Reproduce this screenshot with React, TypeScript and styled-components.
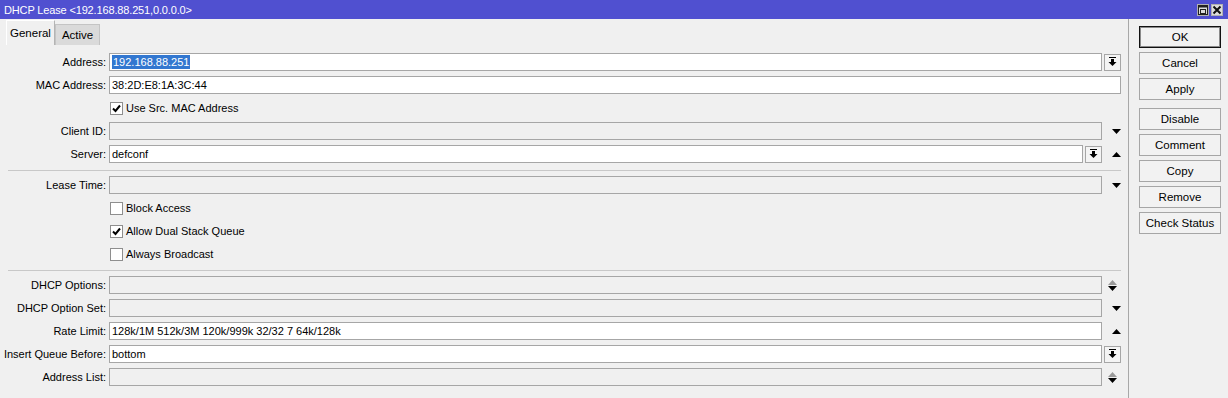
import styled, { createGlobalStyle } from "styled-components";

const GlobalStyle = createGlobalStyle`
  html, body {
    margin: 0;
    padding: 0;
    background: #f0f0f0;
  }
  body {
    font-family: "Liberation Sans", Arial, sans-serif;
    font-size: 11px;
    color: #000;
  }
`;

type Trail = "none" | "down" | "up" | "both" | "box";

type FieldRow = {
  label: string;
  value?: string;
  disabled?: boolean;
  selected?: boolean;
  trail: Trail;
  box?: boolean;
};

const top: FieldRow[] = [
  { label: "Address:", value: "192.168.88.251", selected: true, trail: "box" },
  { label: "MAC Address:", value: "38:2D:E8:1A:3C:44", trail: "none" },
];

const idRows: FieldRow[] = [
  { label: "Client ID:", disabled: true, trail: "down" },
  { label: "Server:", value: "defconf", trail: "up", box: true },
];

const bottom: FieldRow[] = [
  { label: "DHCP Options:", disabled: true, trail: "both" },
  { label: "DHCP Option Set:", disabled: true, trail: "down" },
  { label: "Rate Limit:", value: "128k/1M 512k/3M 120k/999k 32/32 7 64k/128k", trail: "up" },
  { label: "Insert Queue Before:", value: "bottom", trail: "box" },
  { label: "Address List:", disabled: true, trail: "both" },
];

const buttons = ["OK", "Cancel", "Apply", "Disable", "Comment", "Copy", "Remove", "Check Status"];

const App = () => {
  return (
    <Window>
      <GlobalStyle />
      <TitleBar>
        <TitleText>DHCP Lease &lt;192.168.88.251,0.0.0.0&gt;</TitleText>
        <TitleButtons>
          <TitleButton>
            <svg width="10" height="10" viewBox="0 0 10 10">
              <rect x="0.5" y="0.5" width="9" height="9" fill="none" stroke="#222" />
              <rect x="0.5" y="0.5" width="9" height="2" fill="#222" />
              <rect x="2.5" y="4.5" width="5" height="4" fill="none" stroke="#222" />
            </svg>
          </TitleButton>
          <TitleButton>
            <svg width="10" height="10" viewBox="0 0 10 10">
              <path d="M1.5 1.5 L8.5 8.5 M8.5 1.5 L1.5 8.5" stroke="#111" strokeWidth="2" />
            </svg>
          </TitleButton>
        </TitleButtons>
      </TitleBar>
      <Body>
        <Main>
          <TabBar>
            <Tab $active>General</Tab>
            <Tab>Active</Tab>
          </TabBar>
          <Form>
            {top.map((r) => (
              <Row key={r.label} {...r} />
            ))}
            <CheckRow label="Use Src. MAC Address" checked />
            {idRows.map((r) => (
              <Row key={r.label} {...r} />
            ))}
            <Separator />
            <Row label="Lease Time:" disabled trail="down" />
            <CheckRow label="Block Access" />
            <CheckRow label="Allow Dual Stack Queue" checked />
            <CheckRow label="Always Broadcast" />
            <Separator />
            {bottom.map((r) => (
              <Row key={r.label} {...r} />
            ))}
          </Form>
        </Main>
        <Side>
          {buttons.map((b) => (
            <Button key={b} $primary={b === "OK"} $gapBefore={b === "Disable"}>
              {b}
            </Button>
          ))}
        </Side>
      </Body>
    </Window>
  );
};

const BarArrowIcon = () => (
  <svg width="9" height="10" viewBox="0 0 9 10">
    <rect x="1" y="0" width="7" height="1" fill="#000" />
    <rect x="3" y="2" width="3" height="3" fill="#000" />
    <path d="M0.5 5 L8.5 5 L4.5 9 Z" fill="#000" />
  </svg>
);

const Triangle = ({ up, color = "#000" }: { up?: boolean; color?: string }) => (
  <svg width="9" height="5" viewBox="0 0 9 5">
    <path d={up ? "M0 5 L9 5 L4.5 0 Z" : "M0 0 L9 0 L4.5 5 Z"} fill={color} />
  </svg>
);

const Row = ({ label, value, disabled, selected, trail, box }: FieldRow) => (
  <RowWrap>
    <Label>{label}</Label>
    <Input $disabled={disabled}>
      {value && (selected ? <Selected>{value}</Selected> : value)}
    </Input>
    {box && (
      <BoxButton $inline>
        <BarArrowIcon />
      </BoxButton>
    )}
    {trail !== "none" && (
      <TrailCell>
        {trail === "box" && (
          <BoxButton>
            <BarArrowIcon />
          </BoxButton>
        )}
        {trail === "down" && <Triangle />}
        {trail === "up" && <Triangle up />}
        {trail === "both" && (
          <Stack>
            <Triangle up color="#9a9a9a" />
            <Triangle />
          </Stack>
        )}
      </TrailCell>
    )}
  </RowWrap>
);

const CheckRow = ({ label, checked }: { label: string; checked?: boolean }) => (
  <RowWrap>
    <Label />
    <CheckBox>
      {checked && (
        <svg width="9" height="9" viewBox="0 0 9 9">
          <path d="M1 4.5 L3.5 7 L8 1.5" fill="none" stroke="#000" strokeWidth="2" />
        </svg>
      )}
    </CheckBox>
    <CheckText>{label}</CheckText>
  </RowWrap>
);

const Window = styled.div`
  width: 1228px;
  height: 398px;
  display: flex;
  flex-direction: column;
  background: #f0f0f0;
  overflow: hidden;
`;

const TitleBar = styled.div`
  height: 19px;
  flex: none;
  background: #5050d0;
  display: flex;
  align-items: center;
  justify-content: space-between;
  padding: 0 5px 0 4px;
`;

const TitleText = styled.span`
  color: #fff;
  font-size: 11px;
  letter-spacing: -0.15px;
`;

const TitleButtons = styled.div`
  display: flex;
  gap: 2px;
`;

const TitleButton = styled.div`
  width: 12px;
  height: 12px;
  background: #dcdcdc;
  border: 1px solid #b0b0b0;
  box-sizing: border-box;
  display: flex;
  align-items: center;
  justify-content: center;
`;

const Body = styled.div`
  flex: 1;
  display: flex;
`;

const Main = styled.div`
  width: 1128px;
  border-right: 1px solid #a8a8a8;
  display: flex;
  flex-direction: column;
`;

const TabBar = styled.div`
  height: 26px;
  display: flex;
  align-items: flex-end;
  padding-left: 6px;
`;

const Tab = styled.div<{ $active?: boolean }>`
  box-sizing: border-box;
  height: ${(p) => (p.$active ? 25 : 21)}px;
  padding: 0 ${(p) => (p.$active ? 3 : 6)}px;
  background: ${(p) => (p.$active ? "#f0f0f0" : "#dadada")};
  border: 1px solid ${(p) => (p.$active ? "#ffffff" : "#c4c4c4")};
  border-right-color: ${(p) => (p.$active ? "#b4b4b4" : "#c4c4c4")};
  border-bottom: none;
  display: flex;
  align-items: center;
  font-size: 11.5px;
`;

const Form = styled.div`
  padding: 8px 7px 0 0;
  display: flex;
  flex-direction: column;
  gap: 5px;
`;

const RowWrap = styled.div`
  height: 18px;
  display: flex;
  align-items: center;
`;

const Label = styled.div`
  width: 106px;
  padding-right: 3px;
  text-align: right;
  white-space: nowrap;
  flex: none;
`;

const Input = styled.div<{ $disabled?: boolean }>`
  flex: 1;
  height: 18px;
  box-sizing: border-box;
  border: 1px solid #a6a6a6;
  background: ${(p) => (p.$disabled ? "#f0f0f0" : "#ffffff")};
  padding-left: 2px;
  display: flex;
  align-items: center;
  white-space: nowrap;
  overflow: hidden;
`;

const Selected = styled.span`
  background: #3277d0;
  color: #fff;
  padding: 1px 1px;
`;

const TrailCell = styled.div`
  width: 19px;
  flex: none;
  display: flex;
  align-items: center;
  justify-content: flex-end;
`;

const BoxButton = styled.div<{ $inline?: boolean }>`
  width: 17px;
  height: 17px;
  margin-left: ${(p) => (p.$inline ? 2 : 0)}px;
  box-sizing: border-box;
  border: 1px solid #a6a6a6;
  background: #f4f4f4;
  display: flex;
  align-items: center;
  justify-content: center;
  flex: none;
`;

const Stack = styled.div`
  display: flex;
  flex-direction: column;
  gap: 1px;
  margin-right: 4px;
`;

const CheckBox = styled.div`
  width: 13px;
  height: 13px;
  box-sizing: border-box;
  border: 1px solid #8e8e8e;
  background: #fff;
  margin-left: 1px;
  display: flex;
  align-items: center;
  justify-content: center;
`;

const CheckText = styled.span`
  margin-left: 3px;
`;

const Separator = styled.div`
  height: 1px;
  background: #c8c8c8;
  margin: 2px 0 0 8px;
  width: 1113px;
`;

const Side = styled.div`
  display: flex;
  flex-direction: column;
  gap: 4px;
  padding: 7px 0 0 10px;
`;

const Button = styled.div<{ $primary?: boolean; $gapBefore?: boolean }>`
  width: 82px;
  height: 22px;
  box-sizing: border-box;
  margin-top: ${(p) => (p.$gapBefore ? 4 : 0)}px;
  border: 1px solid ${(p) => (p.$primary ? "#111" : "#a6a6a6")};
  box-shadow: ${(p) => (p.$primary ? "inset 0 0 0 1px #8a8a8a" : "none")};
  background: #f2f2f2;
  display: flex;
  align-items: center;
  justify-content: center;
  font-size: 11.5px;
`;

export default App;
